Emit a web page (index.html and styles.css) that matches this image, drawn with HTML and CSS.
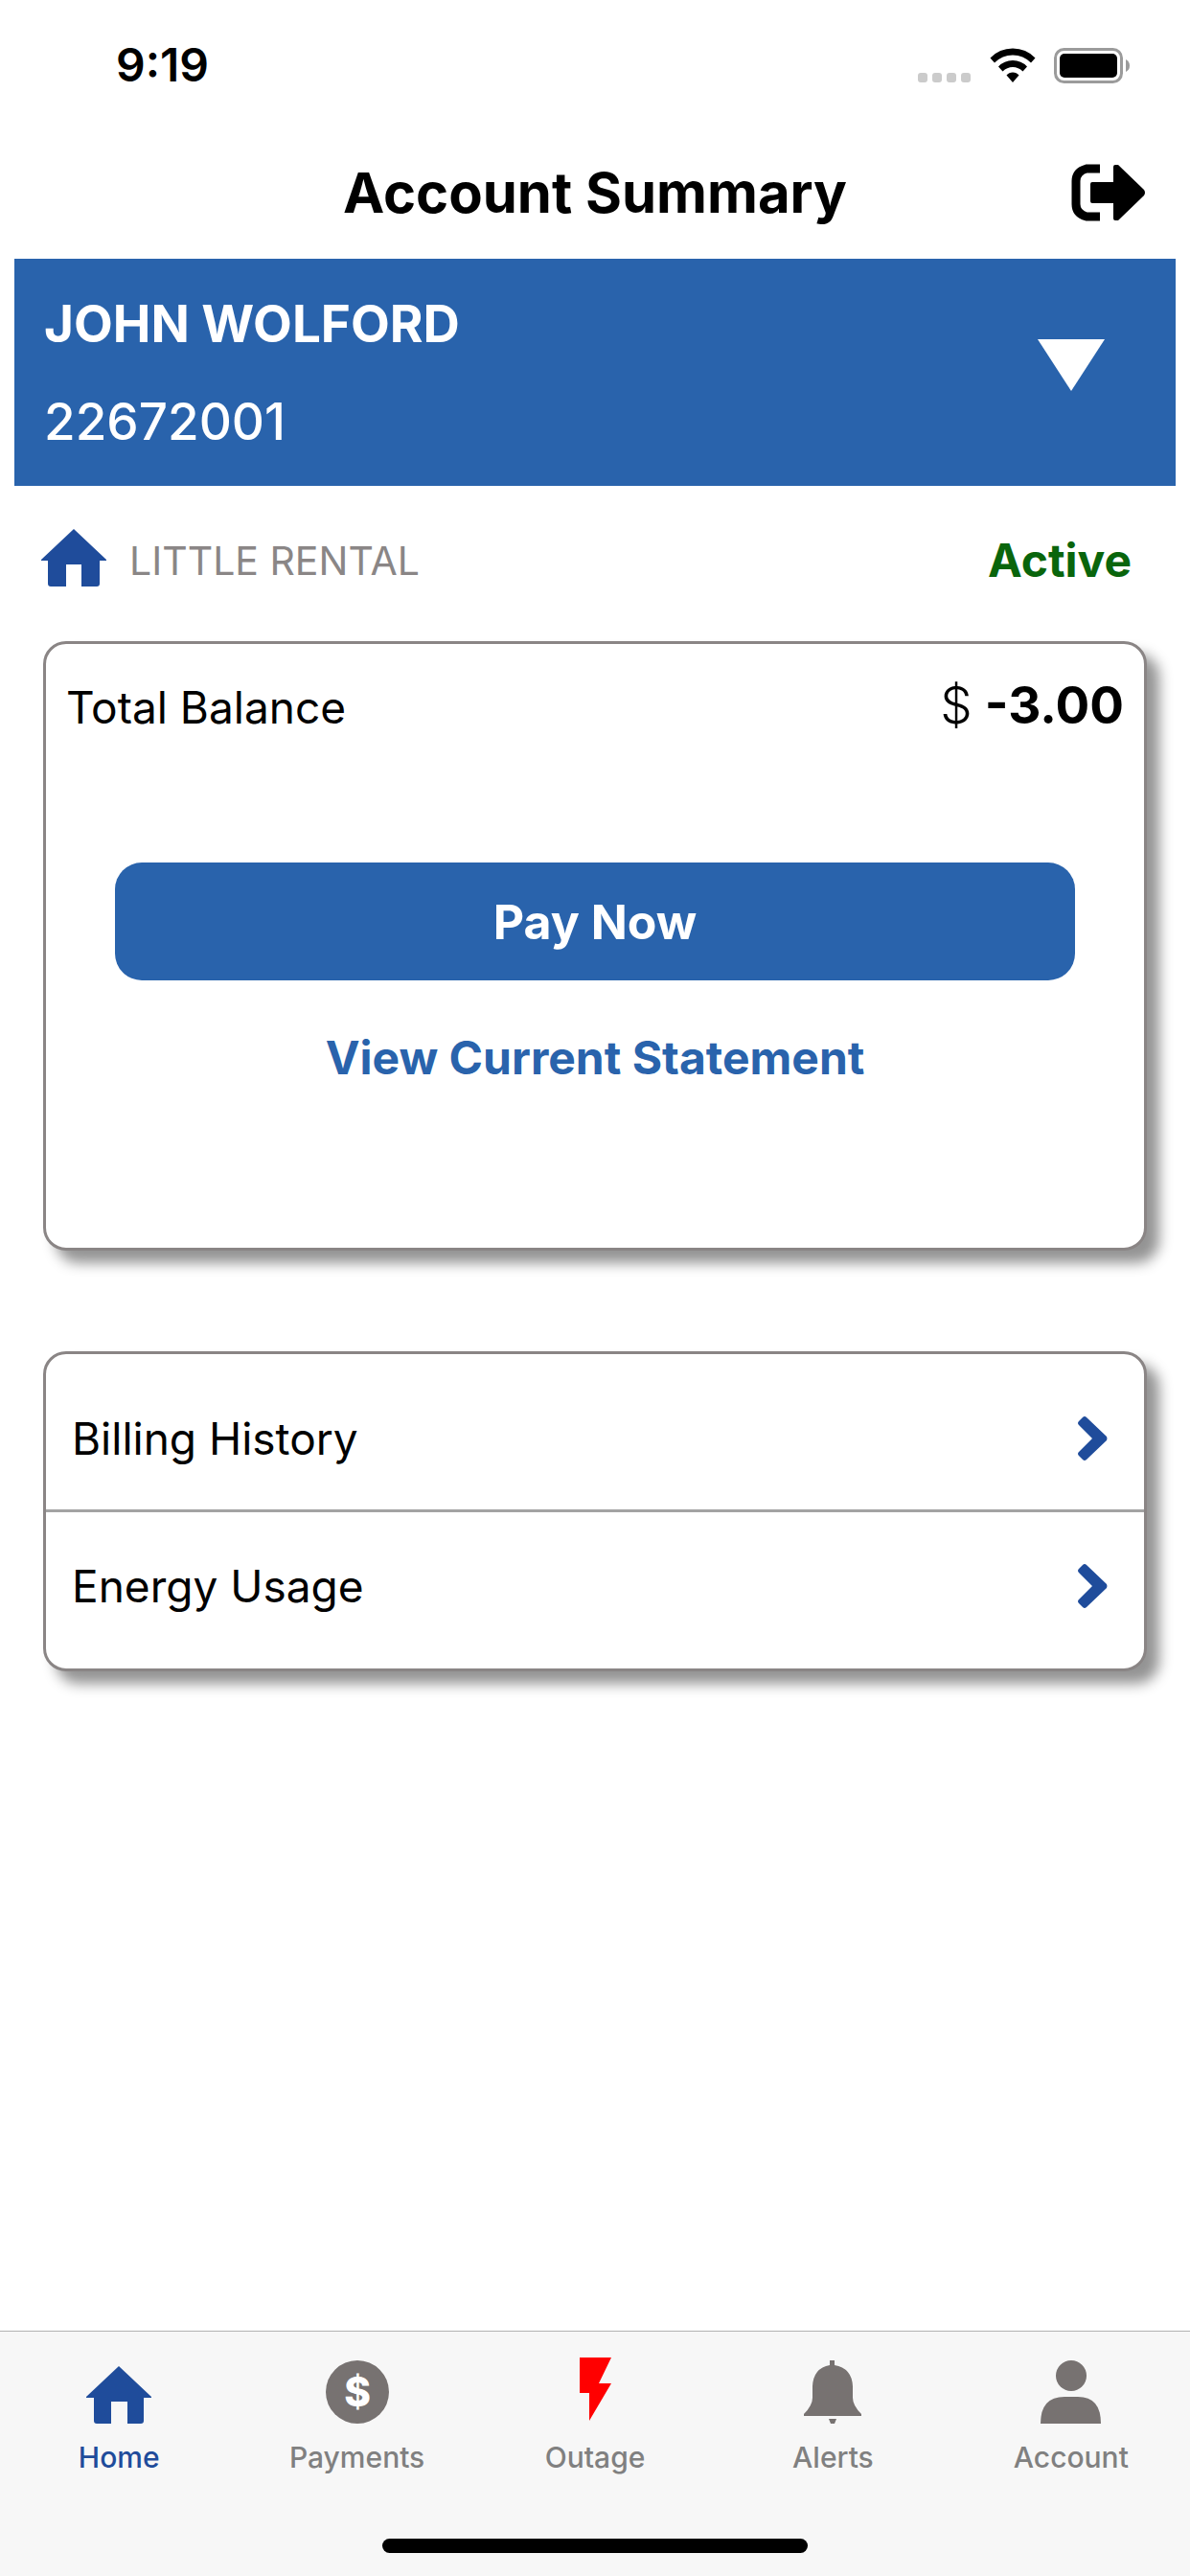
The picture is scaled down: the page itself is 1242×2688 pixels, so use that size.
FILE: index.html
```html
<!DOCTYPE html>
<html lang="en">
<head>
    <meta charset="UTF-8" />
    <meta name="viewport" content="width=device-width, initial-scale=1" />
    <title>Account Summary</title>
    <link rel="stylesheet" href="styles.css">
</head>
<body>
    <div class="app">
        <div class="status-bar">
            <span class="time">9:19</span>
            <div class="status-icons">
                <svg class="signal" width="56" height="36" viewBox="0 0 56 36" fill="#cbcbcb">
                    <rect x="0" y="26" width="10" height="10" rx="3" />
                    <rect x="15" y="26" width="10" height="10" rx="3" />
                    <rect x="30" y="26" width="10" height="10" rx="3" />
                    <rect x="45" y="26" width="10" height="10" rx="3" />
                </svg>
                <svg class="wifi" width="48" height="36" viewBox="0 0 48 36">
                    <path d="M0.5 10.5 Q10 0.5 24 0.5 Q38 0.5 47.5 10.5 L43 15.5 Q35 7.5 24 7.5 Q13 7.5 5 15.5 Z" />
                    <path d="M9 19.5 Q15 13 24 13 Q33 13 39 19.5 L34.5 24.5 Q30 20 24 20 Q18 20 13.5 24.5 Z" />
                    <path d="M17.5 28.5 Q20 25.5 24 25.5 Q28 25.5 30.5 28.5 L24 36 Z" />
                </svg>
                <svg class="battery" width="80" height="37" viewBox="0 0 80 37">
                    <rect x="1.5" y="1.5" width="69" height="34" rx="9" fill="none" stroke="#9b9b9b" stroke-width="3" />
                    <rect x="6" y="6" width="60" height="25" rx="5" />
                    <path d="M75 12 Q79 14 79 18.5 Q79 23 75 25 Z" fill="#9b9b9b" />
                </svg>
            </div>
        </div>

        <header class="header">
            <h1>Account Summary</h1>
            <button class="logout" aria-label="Log out">
                <svg width="78" height="60" viewBox="0 0 78 60">
                    <path d="M30 5 H16 Q5 8 5 18 V42 Q5 52 16 55 H30" fill="none" stroke="#000" stroke-width="9" />
                    <path d="M22 19 H44 V3 Q44 1 46 1 H49 L76 27 Q78 30 76 33 L49 59 H46 Q44 59 44 57 V41 H22 Q20 41 20 39 V21 Q20 19 22 19 Z" />
                </svg>
            </button>
        </header>

        <button class="account-picker" aria-haspopup="listbox">
            <span class="account-info">
                <span class="account-name">JOHN WOLFORD</span>
                <span class="account-number">22672001</span>
            </span>
            <svg class="caret" width="70" height="54" viewBox="0 0 70 54">
                <path d="M0 0 H70 L35 54 Z" fill="#fff" />
            </svg>
        </button>

        <main class="content">
            <div class="location">
                <svg class="house" width="68" height="60" viewBox="0 0 68 60">
                    <path d="M34 0 L68 32 V33 H61 V57 Q61 60 58 60 H42 V37 H26 V60 H10 Q7 60 7 57 V33 H0 V32 Z" />
                </svg>
                <span class="location-name">LITTLE RENTAL</span>
                <span class="location-status">Active</span>
            </div>

            <section class="card balance">
                <div class="balance-row">
                    <span class="label">Total Balance</span>
                    <span class="amount"><span class="currency">$</span> <b>-3.00</b></span>
                </div>
                <button class="pay">Pay Now</button>
                <a class="statement" href="#statement">View Current Statement</a>
            </section>

            <nav class="card links">
                <a href="#billing">Billing History
                    <svg width="32" height="48" viewBox="0 0 32 48">
                        <path d="M6 2 Q8 0 10 2 L31 22 Q32 24 31 26 L10 46 Q8 48 6 46 L2 42 Q0 40 2 38 L16 24 L2 10 Q0 8 2 6 Z" />
                    </svg>
                </a>
                <a href="#usage">Energy Usage
                    <svg width="32" height="48" viewBox="0 0 32 48">
                        <path d="M6 2 Q8 0 10 2 L31 22 Q32 24 31 26 L10 46 Q8 48 6 46 L2 42 Q0 40 2 38 L16 24 L2 10 Q0 8 2 6 Z" />
                    </svg>
                </a>
            </nav>
        </main>

        <footer class="footer">
            <nav class="tabs">
                <a class="tab active" href="#home">
                    <svg width="68" height="68" viewBox="0 0 68 68">
                        <path d="M34 7 L68 39 V40 H60 V64 Q60 67 57 67 H43 V44 H26 V67 H11 Q8 67 8 64 V40 H0 V39 Z" />
                    </svg>
                    Home
                </a>
                <a class="tab" href="#payments">
                    <svg width="68" height="68" viewBox="0 0 68 68">
                        <circle cx="34" cy="34" r="33" />
                        <text class="coin" x="34" y="49" text-anchor="middle">$</text>
                    </svg>
                    Payments
                </a>
                <a class="tab" href="#outage">
                    <svg width="68" height="68" viewBox="0 0 68 68">
                        <path d="M18 -2 H51 L38 25 H51 L28 64 V35 H18 Z" fill="#f00" />
                    </svg>
                    Outage
                </a>
                <a class="tab" href="#alerts">
                    <svg width="68" height="68" viewBox="0 0 68 68">
                        <path d="M31 1 H36 V6 Q54 9 55 28 V40 Q55 48 64 57 V59 H4 V57 Q13 48 13 40 V28 Q14 9 31 6 Z" />
                        <path d="M30 62 H38 L36 67 H32 Z" />
                    </svg>
                    Alerts
                </a>
                <a class="tab" href="#account">
                    <svg width="68" height="68" viewBox="0 0 68 68">
                        <circle cx="34" cy="17" r="16" />
                        <path d="M2 67 Q2 39 27 39 H41 Q65 39 65 67 Z" />
                    </svg>
                    Account
                </a>
            </nav>
            <div class="home-indicator"></div>
        </footer>
    </div>
</body>
</html>
```

FILE: styles.css
```css
* {
    box-sizing: border-box;
}

body {
    margin: 0;
    font-family: Inter, "Liberation Sans", sans-serif;
    font-size: 46px;
    line-height: 60px;
    color: #000;
    background-color: #fff;
}

svg {
    display: block;
    flex: none;
    overflow: visible;
}

a {
    text-decoration: none;
    color: inherit;
}

button {
    font-family: inherit;
    border: none;
    padding: 0;
    background: none;
    cursor: pointer;
}

.app {
    display: flex;
    flex-direction: column;
    min-height: 100vh;
}

/* status bar */
.status-bar {
    display: flex;
    justify-content: space-between;
    align-items: center;
    height: 136px;
    padding: 0 62px 0 121px;
}

.time {
    font-size: 48px;
    font-weight: 600;
}

.status-icons {
    display: flex;
    align-items: center;
    gap: 19px;
}

/* header */
.header {
    display: grid;
    grid-template-columns: 1fr auto 1fr;
    align-items: center;
    height: 134px;
    padding: 0 46px 4px;
}

.header h1 {
    grid-column: 2;
    margin: 0;
    font-size: 58px;
    font-weight: 700;
}

.logout {
    justify-self: end;
}

/* account picker */
.account-picker {
    display: flex;
    justify-content: space-between;
    align-items: center;
    height: 237px;
    margin: 0 15px;
    padding: 0 74px 0 31px;
    background-color: #2963ac;
    color: #fff;
    text-align: left;
}

.account-info {
    display: flex;
    flex-direction: column;
    gap: 42px;
    font-size: 53px;
    line-height: 60px;
}

.account-name {
    font-weight: 700;
}

.account-number {
    font-weight: 500;
}

.caret {
    margin-bottom: 16px;
}

/* content */
.content {
    flex: 1;
    padding: 0 45px;
}

.location {
    display: flex;
    align-items: center;
    height: 162px;
    padding: 0 16px 6px 0;
}

.house {
    fill: #1f4c9b;
    margin: 0 24px 6px -2px;
}

.location-name {
    flex: 1;
    font-size: 41px;
    color: #8a8686;
}

.location-status {
    font-size: 48px;
    font-weight: 700;
    color: #09650c;
}

.card {
    border: 3px solid #8a8585;
    border-radius: 24px;
    background-color: #fff;
    box-shadow: 13px 13px 14px #949494;
}

.balance {
    display: flex;
    flex-direction: column;
    padding: 34px 21px 168px;
}

.balance-row {
    display: flex;
    justify-content: space-between;
    align-items: baseline;
    height: 60px;
    margin-bottom: 134px;
}

.currency {
    font-size: 53px;
    font-weight: 300;
}

.amount b {
    font-size: 53px;
    font-weight: 700;
}

.pay {
    height: 123px;
    margin: 0 51px 51px;
    border-radius: 28px;
    background-color: #2963ac;
    color: #fff;
    font-size: 50px;
    font-weight: 700;
}

.statement {
    align-self: center;
    color: #2963ac;
    font-size: 48px;
    font-weight: 700;
}

.links {
    margin-top: 105px;
}

.links a {
    display: flex;
    justify-content: space-between;
    align-items: center;
    height: 162px;
    padding: 14px 38px 0 27px;
}

.links a + a {
    height: 166px;
    padding-top: 0;
    padding-bottom: 10px;
    border-top: 3px solid #a3a3a3;
}

.links svg {
    fill: #1f4c9b;
}

/* bottom tabs */
.footer {
    border-top: 1px solid #b2b2b2;
    padding: 29px 0 24px;
    background-color: #f7f7f7;
}

.tabs {
    display: flex;
}

.tab {
    display: flex;
    flex: 1;
    flex-direction: column;
    align-items: center;
    gap: 16px;
    font-size: 30px;
    line-height: 36px;
    font-weight: 500;
    color: #808080;
}

.tab svg {
    fill: #777271;
}

.tab.active {
    color: #1f4c9b;
}

.tab.active svg {
    fill: #1f4c9b;
}

.coin {
    font-size: 42px;
    font-weight: 800;
    fill: #fff;
}

.home-indicator {
    width: 444px;
    height: 15px;
    margin: 67px auto 0;
    border-radius: 8px;
    background-color: #000;
}
```
